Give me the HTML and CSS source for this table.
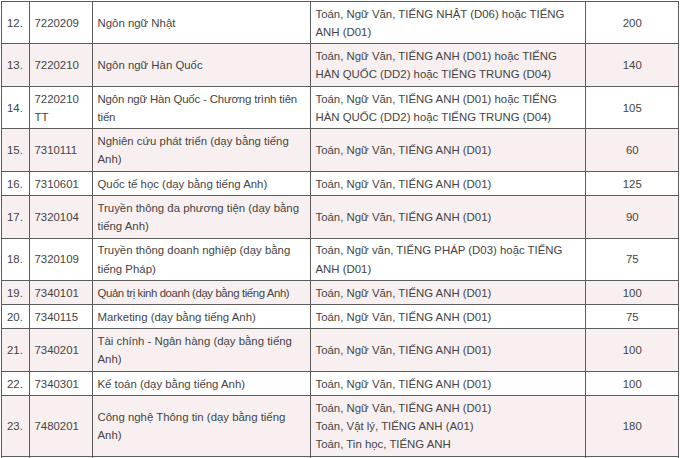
FILE: index.html
```html
<!DOCTYPE html>
<html lang="vi">
<head>
<meta charset="utf-8">
<title>Chỉ tiêu tuyển sinh</title>
<link rel="stylesheet" href="styles.css">
</head>
<body>
<table class="quota">
<colgroup>
<col class="c-no"><col class="c-code"><col class="c-name"><col class="c-combo"><col class="c-num">
</colgroup>
<tbody>
<tr><td>12.</td><td>7220209</td><td>Ngôn ngữ Nhật</td><td>Toán, Ngữ Văn, TIẾNG NHẬT (D06) hoặc TIẾNG ANH (D01)</td><td class="num">200</td></tr>
<tr><td>13.</td><td>7220210</td><td>Ngôn ngữ Hàn Quốc</td><td>Toán, Ngữ Văn, TIẾNG ANH (D01) hoặc TIẾNG HÀN QUỐC (DD2) hoặc TIẾNG TRUNG (D04)</td><td class="num">140</td></tr>
<tr><td>14.</td><td>7220210 TT</td><td class="tight">Ngôn ngữ Hàn Quốc - Chương trình tiên tiến</td><td>Toán, Ngữ Văn, TIẾNG ANH (D01) hoặc TIẾNG HÀN QUỐC (DD2) hoặc TIẾNG TRUNG (D04)</td><td class="num">105</td></tr>
<tr><td>15.</td><td>7310111</td><td>Nghiên cứu phát triển (dạy bằng tiếng Anh)</td><td>Toán, Ngữ Văn, TIẾNG ANH (D01)</td><td class="num">60</td></tr>
<tr><td>16.</td><td>7310601</td><td>Quốc tế học (dạy bằng tiếng Anh)</td><td>Toán, Ngữ Văn, TIẾNG ANH (D01)</td><td class="num">125</td></tr>
<tr><td>17.</td><td>7320104</td><td>Truyền thông đa phương tiện (dạy bằng tiếng Anh)</td><td>Toán, Ngữ Văn, TIẾNG ANH (D01)</td><td class="num">90</td></tr>
<tr><td>18.</td><td>7320109</td><td>Truyền thông doanh nghiệp (dạy bằng tiếng Pháp)</td><td>Toán, Ngữ văn, TIẾNG PHÁP (D03) hoặc TIẾNG ANH (D01)</td><td class="num">75</td></tr>
<tr><td>19.</td><td>7340101</td><td class="tight2">Quản trị kinh doanh (dạy bằng tiếng Anh)</td><td>Toán, Ngữ Văn, TIẾNG ANH (D01)</td><td class="num">100</td></tr>
<tr><td>20.</td><td>7340115</td><td>Marketing (dạy bằng tiếng Anh)</td><td>Toán, Ngữ Văn, TIẾNG ANH (D01)</td><td class="num">75</td></tr>
<tr><td>21.</td><td>7340201</td><td>Tài chính - Ngân hàng (dạy bằng tiếng Anh)</td><td>Toán, Ngữ Văn, TIẾNG ANH (D01)</td><td class="num">100</td></tr>
<tr><td>22.</td><td>7340301</td><td>Kế toán (dạy bằng tiếng Anh)</td><td>Toán, Ngữ Văn, TIẾNG ANH (D01)</td><td class="num">100</td></tr>
<tr><td>23.</td><td>7480201</td><td>Công nghệ Thông tin (dạy bằng tiếng Anh)</td><td><div>Toán, Ngữ Văn, TIẾNG ANH (D01)</div><div>Toán, Vật lý, TIẾNG ANH (A01)</div><div>Toán, Tin học, TIẾNG ANH</div></td><td class="num">180</td></tr>
<tr><td>&nbsp;</td><td>&nbsp;</td><td>&nbsp;</td><td>&nbsp;</td><td class="num">&nbsp;</td></tr>
</tbody>
</table>
</body>
</html>
```
FILE: styles.css
```css
html, body {
  margin: 0;
  padding: 0;
  background: #ffffff;
  overflow: hidden;
}
body {
  padding: 1px 0 0 1px;
  font-family: "Liberation Sans", Arial, sans-serif;
  font-size: 11.4px;
  line-height: 18.3px;
  color: #444444;
}
.quota {
  border-collapse: collapse;
  table-layout: fixed;
  width: 677px;
}
.c-no { width: 28px; }
.c-code { width: 63px; }
.c-name { width: 218px; }
.c-combo { width: 275px; }
.c-num { width: 93px; }
.quota td {
  border: 1px solid #5c5c5c;
  padding: 2.6px 4px 2.3px 4.5px;
  vertical-align: middle;
  text-align: left;
}
.quota td:first-child {
  padding-left: 5px;
}
.quota td.num {
  text-align: center;
}
.quota tr:nth-child(even) td {
  background: #f8f0f0;
}
.quota td.tight {
  letter-spacing: -0.15px;
}
.quota td.tight2 {
  letter-spacing: -0.4px;
}
```
